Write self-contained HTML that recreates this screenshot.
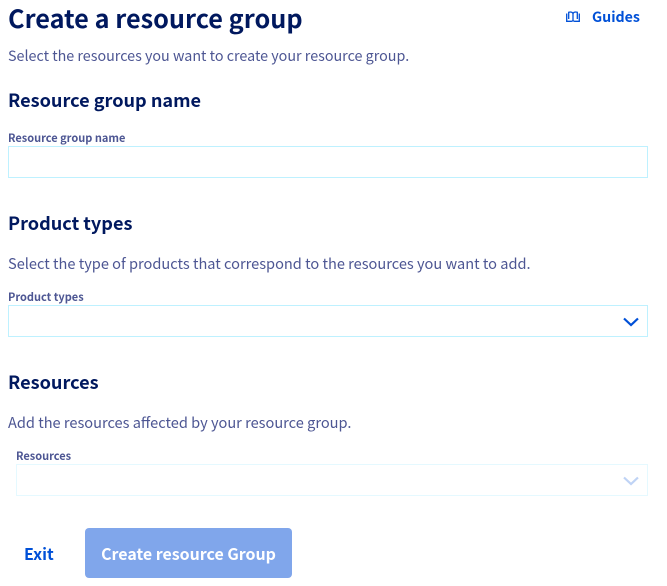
<!DOCTYPE html>
<html lang="en">
<head>
<meta charset="utf-8">
<title>Create a resource group</title>
<style>
html,body{margin:0;padding:0;background:#fff;}
body{width:667px;height:586px;position:relative;overflow:hidden;font-family:"Noto Sans CJK JP","Liberation Sans",sans-serif;}
.t{position:absolute;white-space:nowrap;line-height:1;}
h1,h2,p,label{margin:0;}
.h1{left:8px;top:3px;font-size:25.25px;font-weight:700;color:#00185e;line-height:30px;}
.h2{left:8px;font-size:18.1px;font-weight:700;color:#00185e;line-height:24px;}
.p{left:8px;font-size:14.32px;color:#4d5693;line-height:20px;}
.l{font-size:11px;font-weight:700;color:#4d5693;line-height:14px;}
.box{position:absolute;box-sizing:border-box;height:32px;border:1px solid #bef1ff;background:#fff;}
.g{left:592px;top:7px;font-size:14.2px;font-weight:700;color:#0050d7;line-height:20px;}
svg{position:absolute;display:block;}
.btn{position:absolute;left:85px;top:528px;width:207px;height:50px;color:#fff;font-size:15.95px;font-weight:700;line-height:50px;text-align:center;}
.btnbg{position:absolute;left:85px;top:528px;width:207px;height:50px;background:#80a6eb;border-radius:4px;}
.exit{left:24px;top:543px;font-size:16px;font-weight:700;color:#0050d7;line-height:20px;}
</style>
</head>
<body>
<h1 class="t h1">Create a resource group</h1>
<svg style="left:566px;top:11px" width="14" height="11" viewBox="0 0 14 11" fill="none" stroke="#0050d7" stroke-width="1.300"><path d="M.7 2.500v7.800h4.800c.7 0 1.100-.3 1.500-.8.4.5.8.8 1.500.8h4.800V2.500"/><path d="M2.700 8V1.300c1.800-.6 3.400-.2 4.300 1 .9-1.200 2.500-1.600 4.300-1V8"/><path d="M7 2.300v7"/></svg>
<span class="t g">Guides</span>
<p class="t p" style="top:46px">Select the resources you want to create your resource group.</p>
<h2 class="t h2" style="top:88px">Resource group name</h2>
<label class="t l" style="left:8px;top:131px">Resource group name</label>
<div class="box" style="left:8px;top:146px;width:640px"></div>
<h2 class="t h2" style="top:211px">Product types</h2>
<p class="t p" style="top:254px;font-size:14.58px">Select the type of products that correspond to the resources you want to add.</p>
<label class="t l" style="left:8px;top:290px">Product types</label>
<div class="box" style="left:8px;top:305px;width:640px"></div>
<svg style="left:623px;top:317px" width="16" height="11" viewBox="0 0 16 11" fill="none" stroke="#0050d7" stroke-width="2.200"><path d="M1 1.500l7 6.500 7-6.500"/></svg>
<h2 class="t h2" style="top:370px">Resources</h2>
<p class="t p" style="top:413px;font-size:14.58px">Add the resources affected by your resource group.</p>
<label class="t l" style="left:16px;top:449px">Resources</label>
<div class="box" style="left:16px;top:464px;width:632px;border-color:#e5f9ff"></div>
<svg style="left:623px;top:476px" width="16" height="11" viewBox="0 0 16 11" fill="none" stroke="#bfd3f5" stroke-width="2.200"><path d="M1 1.500l7 6.500 7-6.500"/></svg>
<span class="t exit">Exit</span>
<div class="btnbg"></div>
<div class="btn">Create resource Group</div>
</body>
</html>
